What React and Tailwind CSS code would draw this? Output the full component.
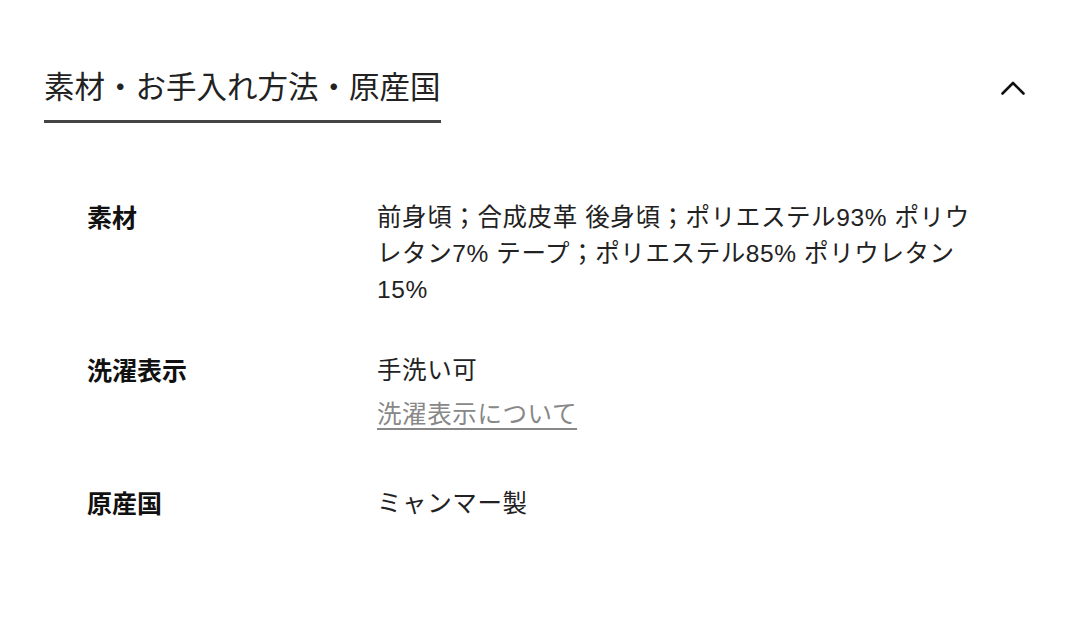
import React from 'react';

const font = { fontFamily: '"Liberation Sans", "Noto Sans CJK JP", sans-serif' };

const rows = [
  {
    label: '素材',
    value: '前身頃；合成皮革 後身頃；ポリエステル93% ポリウレタン7% テープ；ポリエステル85% ポリウレタン15%',
  },
  { label: '洗濯表示', value: '手洗い可', link: '洗濯表示について' },
  { label: '原産国', value: 'ミャンマー製' },
];

const ChevronUp = () => (
  <svg width="24" height="14" viewBox="0 0 24 14" fill="none">
    <polyline
      points="1.5,12.5 12,2 22.5,12.5"
      stroke="#111"
      strokeWidth="2.6"
      strokeLinecap="round"
      strokeLinejoin="round"
    />
  </svg>
);

const App = () => {
  return (
    <div className="w-[1080px] h-[638px] bg-white overflow-hidden pl-[44px] pr-[55px]" style={font}>
      {/* Accordion header */}
      <div className="flex items-center justify-between pt-[65px]">
        <h2 className="inline-block text-[30.5px] leading-[45px] font-normal text-[#222] border-b-[3px] border-[#444] pb-[10px]">
          素材・お手入れ方法・原産国
        </h2>
        <button className="flex items-center justify-center -mt-[12px]">
          <ChevronUp />
        </button>
      </div>

      {/* Details */}
      <div className="mt-[77px] pl-[43px] flex flex-col gap-[45px]">
        {rows.map((row) => (
          <div key={row.label} className="grid grid-cols-[290px_604px] text-[24.5px] leading-[36px]">
            <div className="font-bold text-[25px] text-[#111]">{row.label}</div>
            <div className="text-[#222] tracking-[0.6px]">
              <p>{row.value}</p>
              {row.link && (
                <a
                  href="#"
                  className="block my-2 text-[#888] underline decoration-[#888] underline-offset-[5px] decoration-[1.5px]"
                >
                  {row.link}
                </a>
              )}
            </div>
          </div>
        ))}
      </div>
    </div>
  );
};

export default App;
